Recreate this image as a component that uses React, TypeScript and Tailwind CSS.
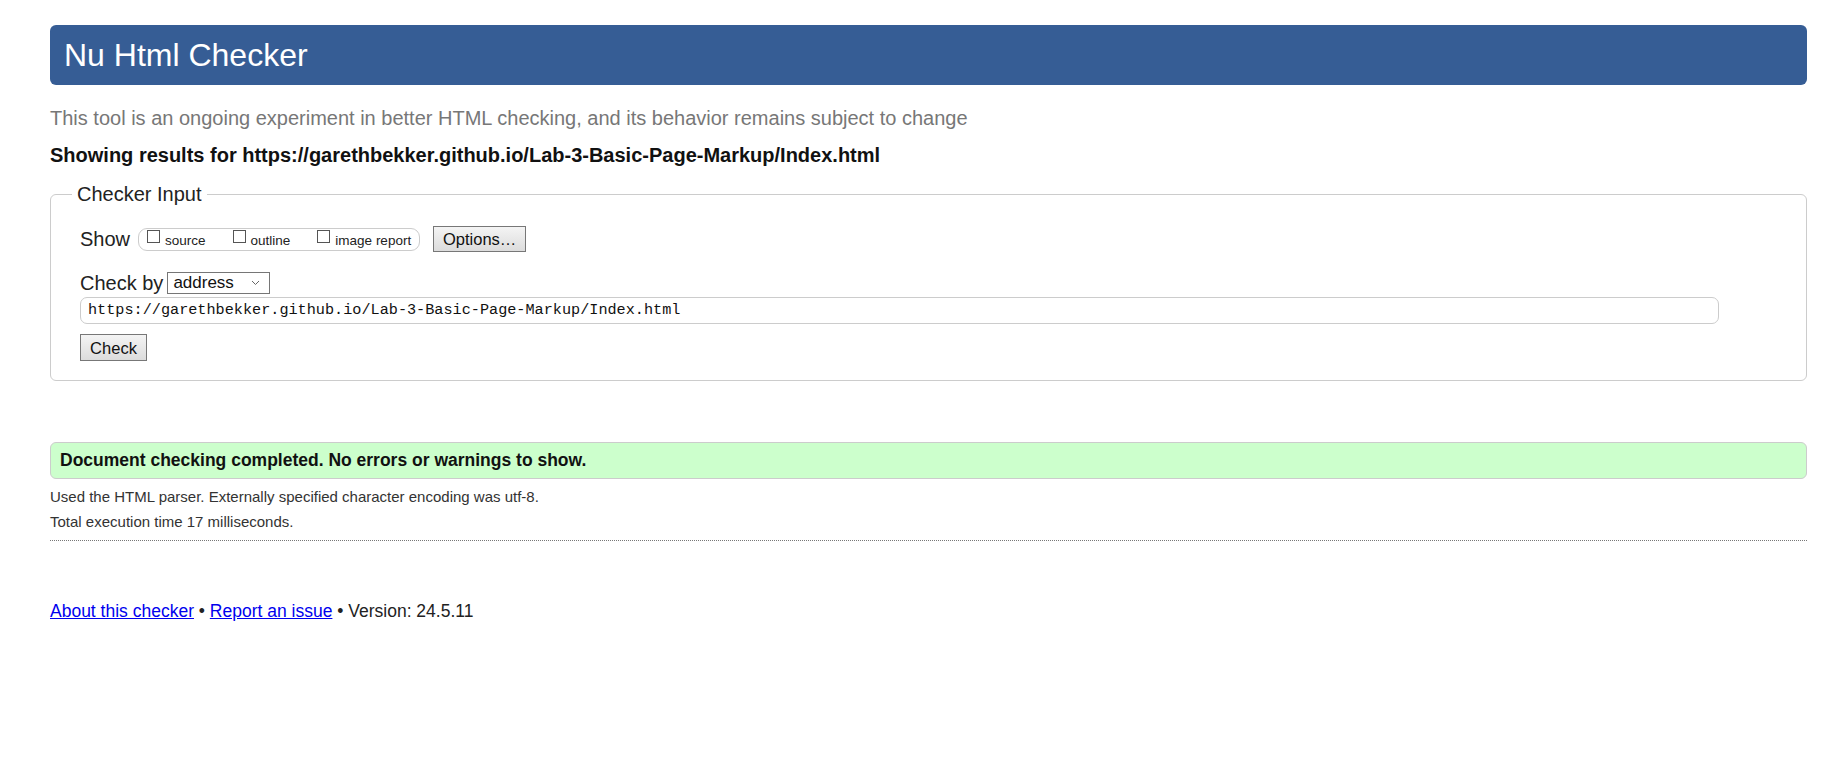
const Checkbox = ({ label }: { label: string }) => (
  <label className="flex items-start mr-[27px] last:mr-0">
    <span className="mt-[1px] w-[13px] h-[13px] border border-[#555] bg-white mr-[5px]" />
    <span className="text-[13.5px] leading-[16px] mt-[4px] text-[#222]">{label}</span>
  </label>
);

const App = () => {
  return (
    <div className="min-h-screen bg-white pl-[50px] pr-[26px] pt-[25px] text-[#222] font-['Liberation_Sans',Arial,sans-serif]">
      <h1 className="h-[60px] rounded-[6px] bg-[#365d95] text-white text-[32px] leading-[60px] pl-[14px]">
        Nu Html Checker
      </h1>

      <p className="mt-[21px] text-[20px] leading-[24px] text-[#777]">
        This tool is an ongoing experiment in better HTML checking, and its behavior remains subject to change
      </p>

      <p className="mt-[13px] text-[20px] leading-[24px] font-bold text-[#111]">
        Showing results for https://garethbekker.github.io/Lab-3-Basic-Page-Markup/Index.html
      </p>

      <fieldset className="mt-[15px] border border-[#ccc] rounded-[6px] pl-[29px] pr-[87px] pb-[19px]">
        <legend className="ml-[-8px] px-[5px] text-[20px] leading-[24px] text-[#222]">Checker Input</legend>

        <div className="flex items-center mt-[20px]">
          <span className="text-[20px] leading-[24px] mr-[8px]">Show</span>
          <div className="flex items-start h-[23px] border border-[#ccc] rounded-[9px] pl-[8px] pr-[8px]">
            <Checkbox label="source" />
            <Checkbox label="outline" />
            <Checkbox label="image report" />
          </div>
          <button className="ml-[13px] w-[93px] h-[26px] border border-[#777] bg-gradient-to-b from-[#f4f4f4] to-[#dcdcdc] text-[16.5px] leading-[22px] text-[#111]">
            Options…
          </button>
        </div>

        <div className="flex items-center mt-[19px]">
          <span className="text-[20px] leading-[24px] mr-[4px]">Check by</span>
          <div className="flex items-center justify-between w-[103px] h-[22px] border border-[#767676] bg-white pl-[5px] pr-[9px]">
            <span className="text-[17px] leading-[20px] text-[#111]">address</span>
            <svg width="9" height="6" viewBox="0 0 9 6" fill="none" stroke="#666" strokeWidth="1">
              <path d="M1 1l3.5 3.5L8 1" />
            </svg>
          </div>
        </div>

        <div className="mt-[2px] h-[27px] border border-[#ccc] rounded-[7px] flex items-center pl-[7px] bg-white">
          <span className="font-['Liberation_Mono',monospace] text-[15.2px] text-[#111]">
            https://garethbekker.github.io/Lab-3-Basic-Page-Markup/Index.html
          </span>
        </div>

        <button className="mt-[10px] w-[67px] h-[27px] border border-[#777] bg-gradient-to-b from-[#f4f4f4] to-[#dcdcdc] text-[16.5px] leading-[22px] text-[#111]">
          Check
        </button>
      </fieldset>

      <div className="mt-[61px] h-[37px] border border-[#ccc] rounded-[6px] bg-[#ccffcc] flex items-center pl-[9px]">
        <span className="font-bold text-[17.5px] text-[#111]">
          Document checking completed. No errors or warnings to show.
        </span>
      </div>

      <p className="mt-[8px] text-[15px] leading-[20px] text-[#333]">
        Used the HTML parser. Externally specified character encoding was utf-8.
      </p>
      <p className="mt-[5px] text-[15px] leading-[20px] text-[#333]">Total execution time 17 milliseconds.</p>
      <div className="mt-[8px] border-t border-dotted border-[#777]" />

      <p className="mt-[58px] text-[17.5px] leading-[24px] text-[#222]">
        <a href="#" className="text-[#0000ee] underline">About this checker</a>
        {" • "}
        <a href="#" className="text-[#0000ee] underline">Report an issue</a>
        {" • Version: 24.5.11"}
      </p>
    </div>
  );
};

export default App;
